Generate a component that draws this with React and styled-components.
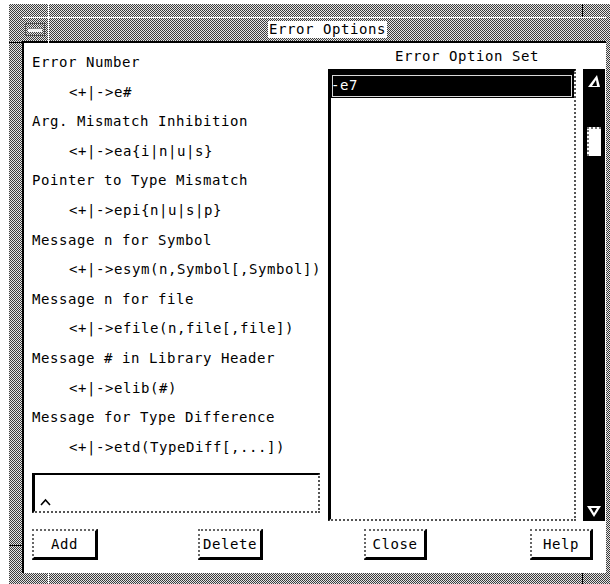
import React from 'react';
import styled, { createGlobalStyle, css } from 'styled-components';

const GlobalStyle = createGlobalStyle`
  html, body {
    margin: 0;
    padding: 0;
    background: #fff;
  }
  body {
    width: 610px;
    height: 584px;
    overflow: hidden;
    font-family: "DejaVu Sans Mono", "Liberation Mono", monospace;
    color: #000;
  }
`;

// 50% gray dither used by the window manager frame
const stipple = css`
  background-color: #e6e6e6;
  background-image: repeating-conic-gradient(#3c3c3c 0 25%, #e6e6e6 0 50%);
  background-size: 2px 2px;
`;

const monoText = css`
  font-family: "DejaVu Sans Mono", "Liberation Mono", monospace;
  font-size: 14px;
  letter-spacing: 0.57px;
  white-space: pre;
`;

const Desktop = styled.div`
  padding: 4px 0 0 9px;
`;

const Frame = styled.div`
  ${stipple}
  position: relative;
  width: 601px;
  height: 580px;
  box-sizing: border-box;
  padding: 13px 4px 11px 13px;
  display: flex;
  flex-direction: column;
`;

// resize-corner ticks drawn on the frame border
const Notch = styled.div`
  position: absolute;
  left: ${p => p.$x}px;
  top: ${p => p.$y}px;
  width: ${p => p.$w}px;
  height: ${p => p.$h}px;
  background: ${p => p.$c};
`;

const TitleBar = styled.div`
  height: 26px;
  box-sizing: border-box;
  border-top: 1px solid #fff;
  border-bottom: 2px solid #000;
  display: flex;
  align-items: stretch;
`;

const MenuCell = styled.div`
  width: 26px;
  border-right: 1px solid #fff;
  display: flex;
  align-items: center;
  justify-content: center;
`;

const MenuButton = styled.div`
  width: 20px;
  height: 13px;
  box-sizing: border-box;
  border: 1px solid #555;
  display: flex;
  align-items: center;
  justify-content: center;
`;

const MenuBar = styled.div`
  width: 14px;
  height: 3px;
  background: #f4f4f4;
  border-top: 1px solid #888;
`;

const TitleArea = styled.div`
  flex: 1;
  display: flex;
  align-items: center;
  justify-content: center;
`;

const TitleText = styled.div`
  ${monoText}
  background: #fff;
  line-height: 17px;
  padding: 0 1px;
`;

const Client = styled.div`
  flex: 1;
  background: #fff;
  border-left: 2px solid #000;
  display: flex;
  flex-direction: column;
  padding: 0 0 13px 8px;
`;

const Panes = styled.div`
  display: flex;
  gap: 8px;
`;

const LeftPane = styled.div`
  width: 288px;
  display: flex;
  flex-direction: column;
`;

const OptionList = styled.div`
  height: 430px;
  box-sizing: border-box;
  padding-top: 5px;
`;

const OptionLine = styled.div`
  ${monoText}
  line-height: 29.6px;
  padding-left: ${p => (p.$sub ? 37 : 0)}px;
`;

const InputBox = styled.div`
  height: 40px;
  box-sizing: border-box;
  border-style: solid dotted dotted solid;
  border-width: 2px 2px 2px 3px;
  border-color: #000 #555 #555 #000;
  display: flex;
  align-items: flex-end;
  padding: 0 0 5px 5px;
`;

const RightPane = styled.div`
  width: 278px;
  display: flex;
  flex-direction: column;
`;

const PaneHeading = styled.div`
  ${monoText}
  height: 26px;
  line-height: 26px;
  text-align: center;
`;

const ListRow = styled.div`
  height: 452px;
  display: flex;
  gap: 7px;
`;

const ListBox = styled.div`
  width: 248px;
  box-sizing: border-box;
  border-style: solid dotted dotted solid;
  border-width: 3px 2px 2px 3px;
  border-color: #000 #555 #555 #000;
`;

const ListItem = styled.div`
  height: 26px;
  box-sizing: border-box;
  padding: 3px 2px 1px 1px;
  background: ${p => (p.$selected ? '#000' : '#fff')};
`;

const ItemLabel = styled.div`
  ${monoText}
  height: 100%;
  box-sizing: border-box;
  border: 1px solid ${p => (p.$selected ? '#d8d8d8' : 'transparent')};
  color: ${p => (p.$selected ? '#fff' : '#000')};
  line-height: 19px;
  text-indent: -2px;
`;

const Scrollbar = styled.div`
  width: 22px;
  background: #000;
  display: flex;
  flex-direction: column;
  align-items: center;
  padding: 5px 0 3px;
  box-sizing: border-box;
`;

const Thumb = styled.div`
  width: 14px;
  height: 29px;
  margin-top: 39px;
  box-sizing: border-box;
  background: #fff;
  border-style: dotted none none dotted;
  border-width: 2px;
  border-color: #777;
`;

const Spacer = styled.div`
  flex: 1;
`;

const ButtonRow = styled.div`
  margin-top: 8px;
  display: grid;
  grid-template-columns: repeat(4, 166px);
`;

const Button = styled.button`
  ${monoText}
  justify-self: start;
  height: 31px;
  min-width: ${p => p.$w}px;
  box-sizing: border-box;
  padding: 0 3px;
  background: #fff;
  color: #000;
  border-style: dotted solid solid dotted;
  border-width: 2px 3px 3px 2px;
  border-color: #666 #000 #000 #666;
  border-radius: 0;
  line-height: 25px;
  cursor: pointer;
`;

const options = [
  ['Error Number', '<+|->e#'],
  ['Arg. Mismatch Inhibition', '<+|->ea{i|n|u|s}'],
  ['Pointer to Type Mismatch', '<+|->epi{n|u|s|p}'],
  ['Message n for Symbol', '<+|->esym(n,Symbol[,Symbol])'],
  ['Message n for file', '<+|->efile(n,file[,file])'],
  ['Message # in Library Header', '<+|->elib(#)'],
  ['Message for Type Difference', '<+|->etd(TypeDiff[,...])'],
];

const buttons = [
  ['Add', 66],
  ['Delete', 65],
  ['Close', 63],
  ['Help', 63],
];

function UpArrow() {
  return (
    <svg width="14" height="14" viewBox="0 0 14 14">
      <polygon points="1,13 10,1 13,13" fill="#fff" />
      <polygon points="5,12 9,6 10,12" fill="#000" />
    </svg>
  );
}

function DownArrow() {
  return (
    <svg width="16" height="13" viewBox="0 0 16 13">
      <polygon points="1,1 15,1 8,12" fill="#fff" />
      <polygon points="5,3 11,3 8,8" fill="#000" />
    </svg>
  );
}

function Caret() {
  return (
    <svg width="11" height="8" viewBox="0 0 11 8">
      <polyline points="1,7 5.5,2 10,7" fill="none" stroke="#000" strokeWidth="1.6" />
    </svg>
  );
}

export default function App() {
  return (
    <>
      <GlobalStyle />
      <Desktop>
        <Frame>
          <Notch $x={39} $y={0} $w={1} $h={39} $c="#fff" />
          <Notch $x={573} $y={0} $w={1} $h={13} $c="#000" />
          <Notch $x={0} $y={38} $w={13} $h={1} $c="#000" />
          <Notch $x={0} $y={541} $w={13} $h={1} $c="#000" />
          <Notch $x={39} $y={569} $w={1} $h={11} $c="#fff" />
          <Notch $x={573} $y={569} $w={1} $h={11} $c="#000" />

          <TitleBar>
            <MenuCell>
              <MenuButton>
                <MenuBar />
              </MenuButton>
            </MenuCell>
            <TitleArea>
              <TitleText>Error Options</TitleText>
            </TitleArea>
          </TitleBar>

          <Client>
            <Panes>
              <LeftPane>
                <OptionList>
                  {options.map(([label, syntax]) => (
                    <React.Fragment key={label}>
                      <OptionLine>{label}</OptionLine>
                      <OptionLine $sub>{syntax}</OptionLine>
                    </React.Fragment>
                  ))}
                </OptionList>
                <InputBox>
                  <Caret />
                </InputBox>
              </LeftPane>

              <RightPane>
                <PaneHeading>Error Option Set</PaneHeading>
                <ListRow>
                  <ListBox>
                    <ListItem $selected>
                      <ItemLabel $selected>-e7</ItemLabel>
                    </ListItem>
                  </ListBox>
                  <Scrollbar>
                    <UpArrow />
                    <Thumb />
                    <Spacer />
                    <DownArrow />
                  </Scrollbar>
                </ListRow>
              </RightPane>
            </Panes>

            <ButtonRow>
              {buttons.map(([label, w]) => (
                <Button key={label} $w={w}>
                  {label}
                </Button>
              ))}
            </ButtonRow>
          </Client>
        </Frame>
      </Desktop>
    </>
  );
}
